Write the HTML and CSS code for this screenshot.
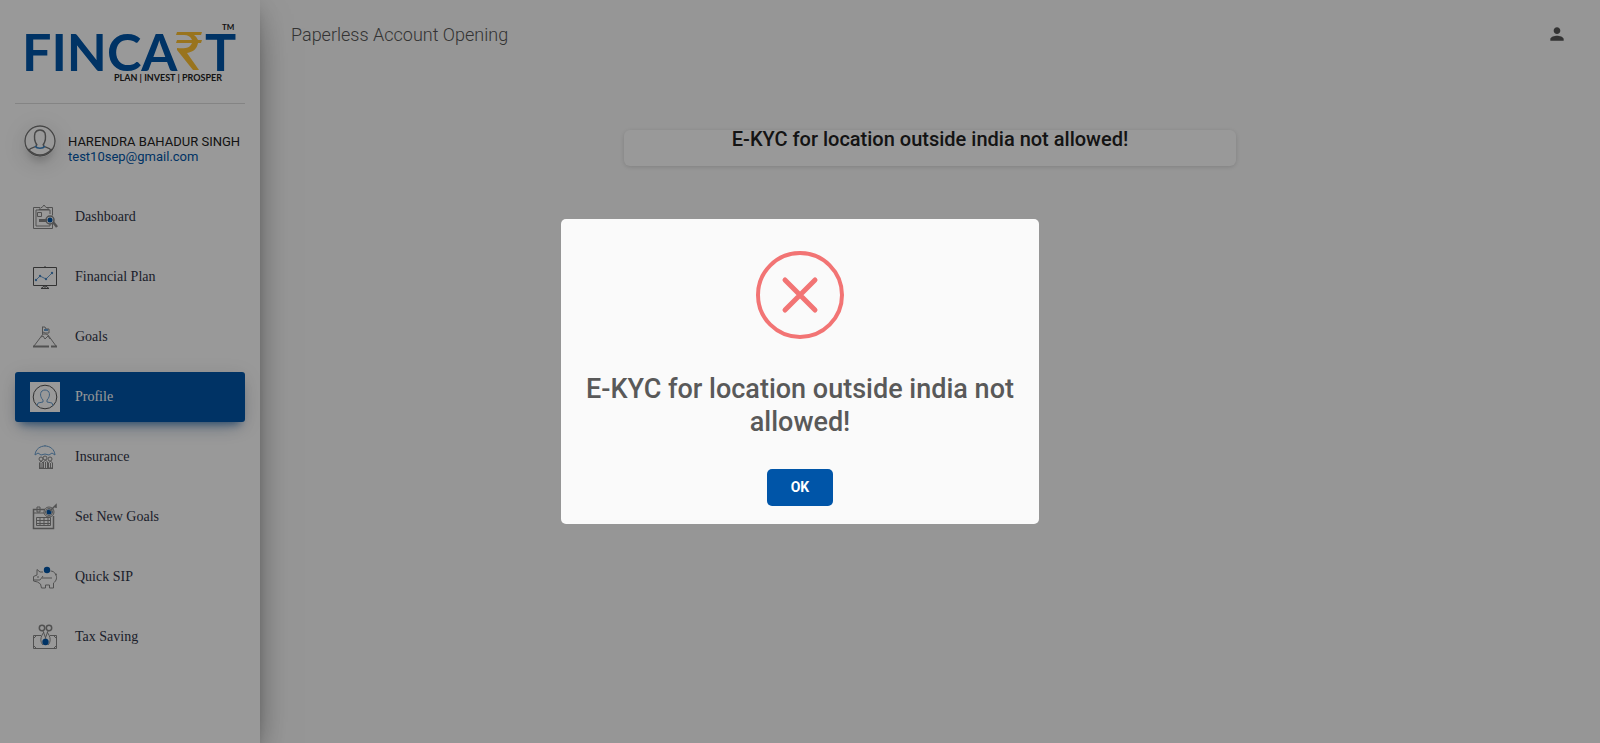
FILE: index.html
```html
<!DOCTYPE html>
<html lang="en">
<head>
<meta charset="utf-8">
<title>Paperless Account Opening</title>
<link rel="stylesheet" href="styles.css">
</head>
<body>
<div class="page">
  <aside class="sidebar">
    <a class="logo" href="#" aria-label="Fincart">
      <svg width="230" height="103" viewBox="15 0 230 103">
        <g class="logo-word">
          <text x="22" y="71">FINCA</text>
          <text x="205" y="71">T</text>
        </g>
        <path fill="#ffc233" d="M177 32h25l-1 3h-7q3 2 4 5h4l-1 3h-3c-1 6-5 9-11 10l12 17h-6l-16-20v-2c8 1 13 0 15-5h-16l1-3h15q-2-5-8-5h-8z"/>
        <text class="logo-tm" x="222" y="30">TM</text>
        <text class="logo-tag" x="114" y="81">PLAN | INVEST | PROSPER</text>
      </svg>
    </a>
    <div class="user">
      <svg class="avatar" viewBox="0 0 32 32" fill="none" stroke="#777" stroke-width="1.400">
        <circle cx="16" cy="16" r="15"/>
        <path d="M13 20c-3-4-3-8-2-12 2-4 8-4 10 0 1 4 1 8-2 12"/>
        <path d="M12.500 19v2c-2 2-6 1-8 5M19.500 19v2c2 2 6 1 8 5M4 24c7 8 17 8 24 0"/>
        <path d="M11 21c2 3 8 3 10 0" stroke="#3d85c6" stroke-width="1.500"/>
      </svg>
      <div class="user-text">
        <span>HARENDRA BAHADUR SINGH</span>
        <a href="#">test10sep@gmail.com</a>
      </div>
    </div>
    <nav class="nav">
      <a href="#"><svg viewBox="0 0 30 30"><path d="M10 5.500H3.500v21h19v-5M17 5.500h5.500v8M6 8v16h14v-2M6 8h14v4M9 7.500l2-2h1l2-2.500 2 2.500h1l2 2zM7.500 10.500h4v4h-4z"/><path d="M9 18.500h8" stroke-width="3"/><circle cx="20" cy="18" r="4" stroke-width="1.500"/><circle class="dot" cx="20" cy="18" r="2.500"/><path d="M23 20l4 5" stroke-width="2.500"/></svg>Dashboard</a>
      <a href="#"><svg viewBox="0 0 30 30"><path d="M3.500 5.500h23v18h-23zM15 4v2M15 24v2M11 26.500l4-3 4 3z" stroke="#555"/><path class="blue" d="M6 18l4-4 6 3 6-6"/><g class="blue-dot"><circle cx="6" cy="18" r="1.200"/><circle cx="10" cy="14" r="1.200"/><circle cx="16" cy="17" r="1.200"/><circle cx="22" cy="11" r="1.200"/></g></svg>Financial Plan</a>
      <a href="#"><svg viewBox="0 0 30 30"><path d="M4 24l9-12h3l2 1 8 11M11 15l2-1 2 3 3-3 2 3M12.500 12V5M12 5h3l1 2h3v4h-4l-2-1"/><path class="blue" d="M14 8h4" stroke-width="2"/><path d="M3 24.500h16M21 24.500h6" stroke-width="2"/></svg>Goals</a>
      <a class="active" href="#" aria-current="page"><svg viewBox="0 0 30 30"><circle cx="15" cy="15" r="11.800" stroke="#555"/><path class="blue" d="M7 24l1-3 5-1v-2c-4-4-3-10 2-10s6 6 2 10v2l5 1 1 3"/></svg>Profile</a>
      <a href="#"><svg viewBox="0 0 30 30"><path class="blue" d="M5 13C6 1 24 1 25 13l-3-2-3 2-4-1-4 1-3-2zM15 4V3"/><circle cx="11" cy="17" r="2"/><circle cx="15" cy="16" r="2"/><circle cx="20" cy="17" r="2"/><path d="M9.500 26v-5l1.500-2 2 2v5zM13.500 26v-6l2-2 2 2v6M18.500 26v-5l2-2 2 2v5zM9 26.500h14M11 21v5M15.500 20v6M20.500 21v5"/></svg>Insurance</a>
      <a href="#"><svg viewBox="0 0 30 30"><path d="M15 7.500H3.500v19h20V14" stroke-width="1.500"/><path d="M4 11h10M7 5h3v5H7zM6.500 15.500h14v8h-14zM6 18.500h15M6 21.500h15M10 15v9M14 15v9M18 15v9"/><circle cx="19" cy="10" r="5"/><circle cx="19" cy="10" r="3.500"/><circle class="dot" cx="19" cy="10" r="2.500"/><path d="M20 9l6-6v3" stroke-width="1.500"/></svg>Set New Goals</a>
      <a href="#"><svg viewBox="0 0 30 30"><path d="M13 10H10L7 7.500V13l-3.500 1.500V19l4 1 3 2 1 4h4v-3h4v3h4v-5c3-2 4-6 2-9-1-2-3-3-5-3M25 13l2-1M7 15h2M4 18h6l3-4M12 16h10"/><circle class="dot" cx="17" cy="8" r="3.200"/></svg>Quick SIP</a>
      <a href="#"><svg viewBox="0 0 30 30"><circle cx="12" cy="6" r="2.700" stroke-width="1.500"/><circle cx="19" cy="6" r="2.700" stroke-width="1.500"/><path d="M13 9l3 8M18 9l-3 8M11 13.500H3.500v13h23v-13H20M4 16l2-2M4 24l2 2M26 16l-2-2M26 24l-2 2M14 10c-4 5-4 10-1 13M17 10c4 5 4 10 1 13"/><circle class="dot" cx="15.500" cy="20" r="3.200"/></svg>Tax Saving</a>
    </nav>
  </aside>
  <div class="main">
    <header class="topbar">
      <a class="page-title" href="#">Paperless Account Opening</a>
      <button class="account" type="button" aria-label="Account">
        <svg width="20" height="20" viewBox="0 0 24 24" fill="#555"><path d="M12 12c2.210 0 4-1.790 4-4s-1.790-4-4-4-4 1.790-4 4 1.790 4 4 4zm0 2c-2.670 0-8 1.340-8 4v2h16v-2c0-2.660-5.330-4-8-4z"/></svg>
      </button>
    </header>
    <main class="content">
      <section class="card"><h4>E-KYC for location outside india not allowed!</h4></section>
    </main>
  </div>
</div>
<div class="overlay">
  <div class="modal" role="alertdialog" aria-modal="true" aria-labelledby="modal-title">
    <svg class="modal-icon" width="88" height="88" viewBox="0 0 88 88" fill="none" stroke="#f27474">
      <circle cx="44" cy="44" r="42" stroke-width="4"/>
      <path d="M29 29l30 30M59 29L29 59" stroke-width="5" stroke-linecap="round"/>
    </svg>
    <h2 id="modal-title">E-KYC for location outside india not allowed!</h2>
    <button class="ok" type="button">OK</button>
  </div>
</div>
</body>
</html>
```
FILE: styles.css
```css
* {
  box-sizing: border-box;
}

body {
  margin: 0;
  background: #fafafa;
  color: #222;
  font-family: Roboto, "Liberation Sans", sans-serif;
}

a {
  color: inherit;
  text-decoration: none;
}

.page {
  display: flex;
  min-height: 100vh;
}

.sidebar {
  flex: 0 0 260px;
  padding: 0 15px;
  background: #fff;
  box-shadow: 0 16px 38px -12px rgba(0, 0, 0, 0.56), 0 4px 25px rgba(0, 0, 0, 0.12), 0 8px 10px -5px rgba(0, 0, 0, 0.2);
}

.logo {
  display: block;
  border-bottom: 1px solid #dcdcdc;
}

.logo svg {
  display: block;
}

.logo-word {
  fill: #0055a8;
  font: 700 52px Lato, sans-serif;
}

.logo-tm {
  fill: #222;
  font: 700 8px Lato, sans-serif;
}

.logo-tag {
  fill: #222;
  font: 700 9px Lato, sans-serif;
}

.user {
  display: flex;
  gap: 12px;
  padding: 21px 0 0 9px;
}

.avatar {
  flex: none;
  width: 32px;
  height: 32px;
  border-radius: 50%;
  box-shadow: 0 10px 30px -12px rgba(0, 0, 0, 0.42), 0 4px 25px rgba(0, 0, 0, 0.12), 0 8px 10px -5px rgba(0, 0, 0, 0.2);
}

.user-text {
  display: flex;
  flex-direction: column;
  padding-top: 9px;
  font-size: 13px;
  line-height: 15px;
  white-space: nowrap;
}

.user-text a {
  color: #0055a8;
}

.nav {
  display: flex;
  flex-direction: column;
  gap: 10px;
  padding-top: 28px;
}

.nav a {
  display: flex;
  align-items: center;
  gap: 15px;
  height: 50px;
  padding: 0 15px;
  border-radius: 3px;
  color: #303548;
  font: 14px "Liberation Serif", serif;
}

.nav svg {
  width: 30px;
  height: 30px;
  fill: none;
  stroke: #888;
}

.nav .blue {
  stroke: #6a9fd0;
}

.nav .blue-dot {
  fill: #4a88c4;
  stroke: none;
}

.nav .dot {
  fill: #0055a8;
  stroke: none;
}

.nav .active {
  background: #0055a8;
  color: #fff;
  box-shadow: 0 12px 20px -10px rgba(0, 85, 168, 0.28), 0 4px 20px rgba(0, 0, 0, 0.12), 0 7px 8px -5px rgba(0, 85, 168, 0.6);
}

.nav .active svg {
  background: #fff;
}

.main {
  flex: 1;
  padding: 0 30px;
}

.topbar {
  display: flex;
  align-items: center;
  justify-content: space-between;
  height: 68px;
}

.page-title {
  padding-left: 1px;
  color: #555;
  font-size: 18px;
  font-weight: 300;
}

.account {
  display: flex;
  padding: 3px;
  border: 0;
  background: none;
}

.content {
  padding-top: 62px;
}

.card {
  width: calc(50% - 28px);
  height: 36px;
  margin: 0 auto;
  border-radius: 6px;
  background: #fff;
  box-shadow: 0 1px 4px rgba(0, 0, 0, 0.14);
}

.card h4 {
  margin: 0;
  font-size: 20px;
  font-weight: 500;
  line-height: 18px;
  text-align: center;
}

.overlay {
  position: fixed;
  inset: 0;
  display: flex;
  align-items: center;
  justify-content: center;
  background: rgba(0, 0, 0, 0.4);
}

.modal {
  display: flex;
  flex-direction: column;
  align-items: center;
  width: 478px;
  padding: 32px 16px 18px;
  border-radius: 5px;
  background: #fafafa;
}

.modal h2 {
  margin: 34px 0 30px;
  color: #595959;
  font-size: 27px;
  font-weight: 500;
  line-height: 33px;
  text-align: center;
}

.ok {
  min-width: 66px;
  padding: 10px 20px;
  border: 0;
  border-radius: 5px;
  background: #0055a8;
  color: #fff;
  font: 700 14px/17px Roboto, sans-serif;
}
```
